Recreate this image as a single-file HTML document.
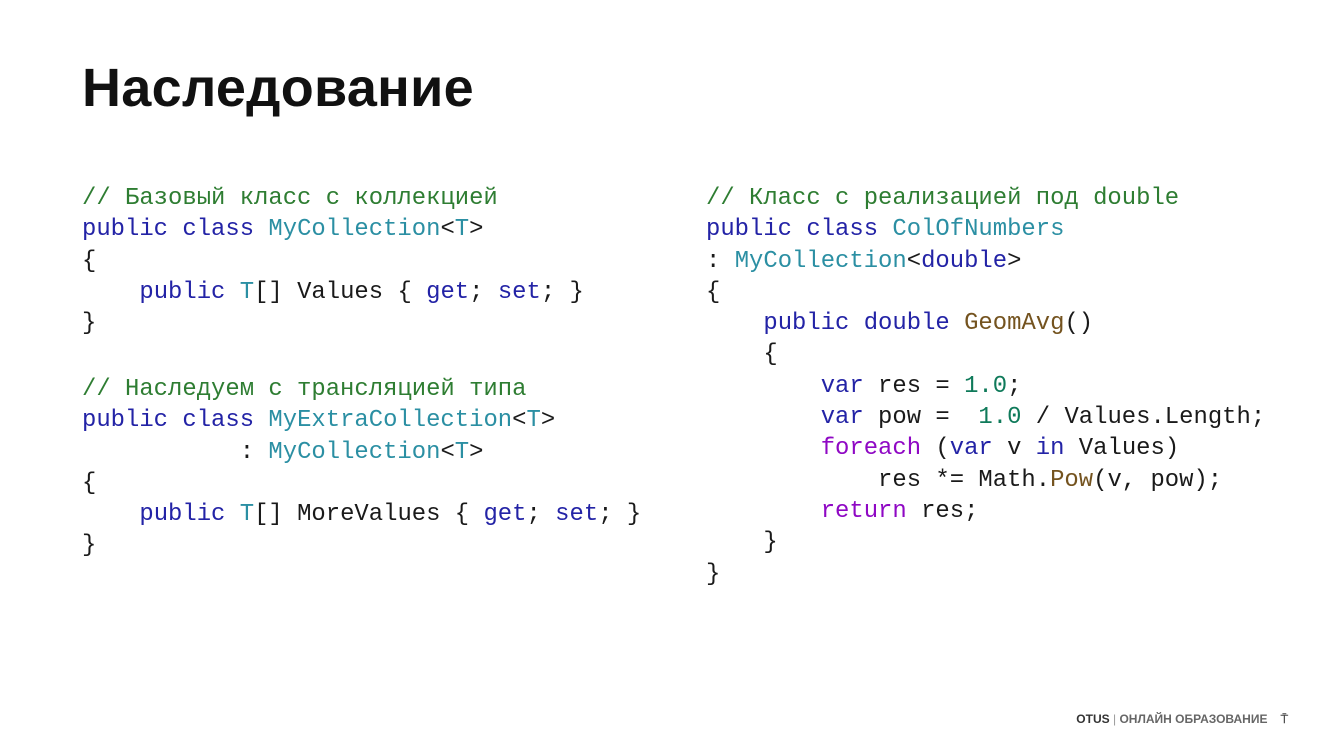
<!DOCTYPE html>
<html><head><meta charset="utf-8"><style>
body{margin:0;width:1334px;height:737px;background:#fff;position:relative;overflow:hidden;font-family:"Liberation Sans",sans-serif}
h1{position:absolute;left:82px;top:57px;margin:0;font-size:54px;font-weight:bold;color:#111;letter-spacing:0.3px}
.c{position:absolute;font-family:"Liberation Mono","DejaVu Sans Mono",monospace;font-size:23.9px;color:#1a1a1a;white-space:pre;line-height:31.3px}
.g{color:#2e7d32}.k{color:#2323a6}.t{color:#2b8fa3}.m{color:#74531f}.n{color:#0f7a5a}
.f{position:absolute;right:46px;top:712px;font-size:12px;color:#666;font-weight:bold}
.f b{color:#333}
</style></head><body>
<h1>Наследование</h1>
<div class="c" style="left:82px;top:183px"><span class="g">// Базовый класс с коллекцией</span>
<span class="k">public class</span> <span class="t">MyCollection</span>&lt;<span class="t">T</span>&gt;
{
    <span class="k">public</span> <span class="t">T</span>[] Values { <span class="k">get</span>; <span class="k">set</span>; }
}
</div>
<div class="c" style="left:82px;top:374px"><span class="g">// Наследуем с трансляцией типа</span>
<span class="k">public class</span> <span class="t">MyExtraCollection</span>&lt;<span class="t">T</span>&gt;
           : <span class="t">MyCollection</span>&lt;<span class="t">T</span>&gt;
{
    <span class="k">public</span> <span class="t">T</span>[] MoreValues { <span class="k">get</span>; <span class="k">set</span>; }
}</div>
<div class="c" style="left:706px;top:183px"><span class="g">// Класс с реализацией под double</span>
<span class="k">public class</span> <span class="t">ColOfNumbers</span>
: <span class="t">MyCollection</span>&lt;<span class="k">double</span>&gt;
{
    <span class="k">public double</span> <span class="m">GeomAvg</span>()
    {
        <span class="k">var</span> res = <span class="n">1.0</span>;
        <span class="k">var</span> pow =  <span class="n">1.0</span> / Values.Length;
        <span class="k" style="color:#8f08c4">foreach</span> (<span class="k">var</span> v <span class="k">in</span> Values)
            res *= Math.<span class="m">Pow</span>(v, pow);
        <span class="k" style="color:#8f08c4">return</span> res;
    }
}</div>
<div class="f"><b>OTUS</b> <span style="font-weight:normal;color:#999">|</span> ОНЛАЙН ОБРАЗОВАНИЕ &nbsp;&nbsp; <span style="color:#444">⍑</span></div>
</body></html>
